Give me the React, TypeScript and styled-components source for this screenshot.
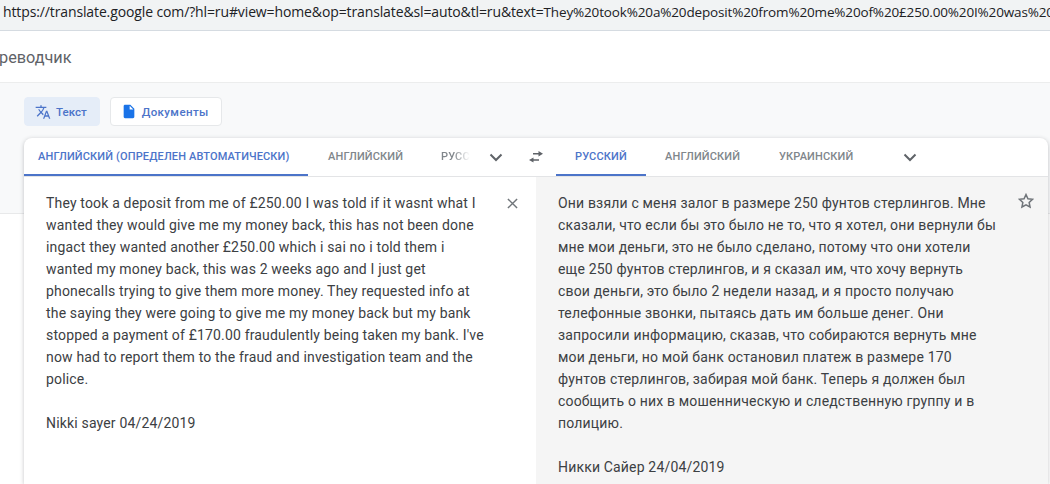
import React from "react";
import styled, { createGlobalStyle } from "styled-components";

const Global = createGlobalStyle`
  html, body { margin: 0; padding: 0; background: #fff; }
  body { width: 1050px; height: 484px; overflow: hidden; font-family: Roboto, "Liberation Sans", sans-serif; }
`;

const Page = styled.div`
  width: 1050px; height: 484px; overflow: hidden; display: flex; flex-direction: column; background: #fff;
`;
const AddressBar = styled.div`
  height: 30px; flex: none; box-sizing: content-box; background: #f1f3f4; border-bottom: 1px solid #d5dbe1;
  font: 14px/24px "Open Sans", "Liberation Sans", sans-serif; color: #202124; padding-left: 3px; white-space: nowrap; overflow: hidden;
`;
const UrlHost = styled.span`
  letter-spacing: -0.12px;
`;
const UrlQuery = styled.span`
  font-size: 13.5px; letter-spacing: -0.15px;
`;
const Header = styled.div`
  height: 52px; flex: none; border-bottom: 1px solid #eceded; display: flex; align-items: center;
  font: 16.3px Roboto, sans-serif; color: #5f6368; margin-left: -1px; padding-top: 1px; box-sizing: border-box; overflow: hidden;
`;
const Main = styled.div`
  flex: 1; background: linear-gradient(#f8f9fa 0 130px, #e8e9ea 130px 131px, #fff 131px); padding: 14px 2px 0 24px; display: flex; flex-direction: column; gap: 12px;
`;
const Modes = styled.div`display: flex; gap: 10px;`;
const ModeButton = styled.div<{ $active?: boolean }>`
  height: 29px; box-sizing: border-box; display: flex; align-items: center; gap: 5px; padding: 0 12px 0 10px;
  border-radius: 4px; font: 500 11.5px Roboto, sans-serif; color: #4c74c9;
  letter-spacing: ${(p) => (p.$active ? "0" : ".4px")};
  background: ${(p) => (p.$active ? "#e5edf8" : "#fff")};
  border: 1px solid ${(p) => (p.$active ? "#e5edf8" : "#e6e8ea")};
`;
const Card = styled.div`
  flex: 1; background: #fff; border-radius: 8px 8px 0 0; box-shadow: 0 1px 4px rgba(60,64,67,.3); overflow: hidden; display: flex; flex-direction: column;
`;
const TabRow = styled.div`
  height: 39px; flex: none; box-sizing: border-box; border-bottom: 1px solid #e3e4e6; display: flex; align-items: stretch;
`;
const Tab = styled.div<{ $active?: boolean; $w: number; $pad: number }>`
  width: ${(p) => p.$w}px; flex: none; box-sizing: border-box; display: flex; align-items: center; padding: 1px 0 0 ${(p) => p.$pad}px;
  font: 500 11px Roboto, sans-serif; letter-spacing: .14px; white-space: nowrap; overflow: hidden;
  color: ${(p) => (p.$active ? "#4c74c9" : "#80868b")};
  border-bottom: 2px solid ${(p) => (p.$active ? "#4c74c9" : "transparent")};
  height: 38px;
`;
const IconSlot = styled.div<{ $w: number }>`
  width: ${(p) => p.$w}px; flex: none; display: flex; align-items: center; justify-content: center; color: #5f6368;
`;
const FadedTab = styled(Tab)`
  -webkit-mask-image: linear-gradient(90deg, #000 60%, transparent 92%); mask-image: linear-gradient(90deg, #000 60%, transparent 92%);
`;
const Panels = styled.div`flex: 1; display: grid; grid-template-columns: 512px 1fr; min-height: 0;`;
const Panel = styled.div<{ $tone?: boolean }>`
  position: relative; box-sizing: border-box; background: ${(p) => (p.$tone ? "#f5f5f5" : "#fff")};
  padding: ${(p) => (p.$tone ? "15px 40px 0 22px" : "15px 48px 0 22px")};
  font: 14px/22px Roboto, sans-serif; letter-spacing: .17px; color: #3c4043; overflow: hidden;
`;
const Line = styled.div`white-space: nowrap; height: 22px;`;
const Spacer = styled.div`height: 22px;`;
const CornerButton = styled.div`
  position: absolute; display: flex; color: #70757a;
`;
const CloseBtn = styled(CornerButton)`top: 21px; right: 18px;`;
const StarBtn = styled(CornerButton)`top: 15px; right: 13px;`;

const en = [
  "They took a deposit from me of £250.00 I was told if it wasnt what I",
  "wanted they would give me my money back, this has not been done",
  "ingact they wanted another £250.00 which i sai no i told them i",
  "wanted my money back, this was 2 weeks ago and I just get",
  "phonecalls trying to give them more money. They requested info at",
  "the saying they were going to give me my money back but my bank",
  "stopped a payment of £170.00 fraudulently being taken my bank. I've",
  "now had to report them to the fraud and investigation team and the",
  "police.",
  "",
  "Nikki sayer 04/24/2019",
];
const ru = [
  "Они взяли с меня залог в размере 250 фунтов стерлингов. Мне",
  "сказали, что если бы это было не то, что я хотел, они вернули бы",
  "мне мои деньги, это не было сделано, потому что они хотели",
  "еще 250 фунтов стерлингов, и я сказал им, что хочу вернуть",
  "свои деньги, это было 2 недели назад, и я просто получаю",
  "телефонные звонки, пытаясь дать им больше денег. Они",
  "запросили информацию, сказав, что собираются вернуть мне",
  "мои деньги, но мой банк остановил платеж в размере 170",
  "фунтов стерлингов, забирая мой банк. Теперь я должен был",
  "сообщить о них в мошенническую и следственную группу и в",
  "полицию.",
  "",
  "Никки Сайер 24/04/2019",
];

const Chevron = () => (
  <svg width="14" height="9" viewBox="0 0 14 9" fill="none" stroke="#5f6368" strokeWidth="2"><path d="M1.5 1.5 7 7l5.5-5.5" /></svg>
);
const Swap = () => (
  <svg width="16" height="12" viewBox="0 0 16 12" fill="#5f6368"><path d="M10.5 0 15 2.7 10.5 5.4V3.5H5V2h5.5zM5.5 6.4V8.3H11v1.4H5.5v1.9L1 8.9z" /></svg>
);
const TranslateIcon = () => (
  <svg width="16" height="16" viewBox="0 0 24 24" fill="#4c74c9"><path d="M12.87 15.07l-2.54-2.51.03-.03A17.5 17.5 0 0 0 14.07 6H17V4h-7V2H8v2H1v2h11.17A15.7 15.7 0 0 1 9 11.35 15.7 15.7 0 0 1 6.69 8h-2c.73 1.63 1.73 3.17 2.98 4.56l-5.09 5.02L4 19l5-5 3.11 3.11.76-2.04zM18.5 10h-2L12 22h2l1.12-3h4.75L21 22h2l-4.5-12zm-2.62 7l1.62-4.33L19.12 17h-3.24z" /></svg>
);
const DocIcon = () => (
  <svg width="16" height="17" viewBox="0 0 24 24" fill="#1a73e8"><path d="M14 2H6c-1.1 0-2 .9-2 2v16c0 1.1.9 2 2 2h12c1.1 0 2-.9 2-2V8l-6-6zm-1 7V3.5L18.5 9H13z" /></svg>
);
const CloseIcon = () => (
  <svg width="11" height="11" viewBox="0 0 12 12" stroke="#70757a" strokeWidth="1.6"><path d="M1 1l10 10M11 1L1 11" /></svg>
);
const StarIcon = () => (
  <svg width="18" height="18" viewBox="0 0 24 24" fill="none" stroke="#70757a" strokeWidth="2"><path d="M12 3.5l2.6 5.6 6.1.7-4.5 4.2 1.2 6-5.4-3-5.4 3 1.2-6-4.5-4.2 6.1-.7z" /></svg>
);

export default function App() {
  return (
    <Page>
      <Global />
      <AddressBar>
        <UrlHost>https://translate.google com/?hl=ru#view=home&amp;op=translate&amp;sl=auto&amp;tl=ru&amp;text=</UrlHost>
        <UrlQuery>They%20took%20a%20deposit%20from%20me%20of%20£250.00%20I%20was%20</UrlQuery>
      </AddressBar>
      <Header>реводчик</Header>
      <Main>
        <Modes>
          <ModeButton $active><TranslateIcon />Текст</ModeButton>
          <ModeButton><DocIcon />Документы</ModeButton>
        </Modes>
        <Card>
          <TabRow>
            <Tab $active $w={284} $pad={14}>АНГЛИЙСКИЙ (ОПРЕДЕЛЕН АВТОМАТИЧЕСКИ)</Tab>
            <Tab $w={113} $pad={20}>АНГЛИЙСКИЙ</Tab>
            <FadedTab $w={53} $pad={20}>РУССКИЙ</FadedTab>
            <IconSlot $w={44}><Chevron /></IconSlot>
            <IconSlot $w={36}><Swap /></IconSlot>
            <IconSlot $w={2} />
            <Tab $active $w={90} $pad={19}>РУССКИЙ</Tab>
            <Tab $w={114} $pad={19}>АНГЛИЙСКИЙ</Tab>
            <Tab $w={114} $pad={19}>УКРАИНСКИЙ</Tab>
            <IconSlot $w={72}><Chevron /></IconSlot>
          </TabRow>
          <Panels>
            <Panel>
              {en.map((t, i) => (t ? <Line key={i}>{t}</Line> : <Spacer key={i} />))}
              <CloseBtn><CloseIcon /></CloseBtn>
            </Panel>
            <Panel $tone>
              {ru.map((t, i) => (t ? <Line key={i}>{t}</Line> : <Spacer key={i} />))}
              <StarBtn><StarIcon /></StarBtn>
            </Panel>
          </Panels>
        </Card>
      </Main>
    </Page>
  );
}
